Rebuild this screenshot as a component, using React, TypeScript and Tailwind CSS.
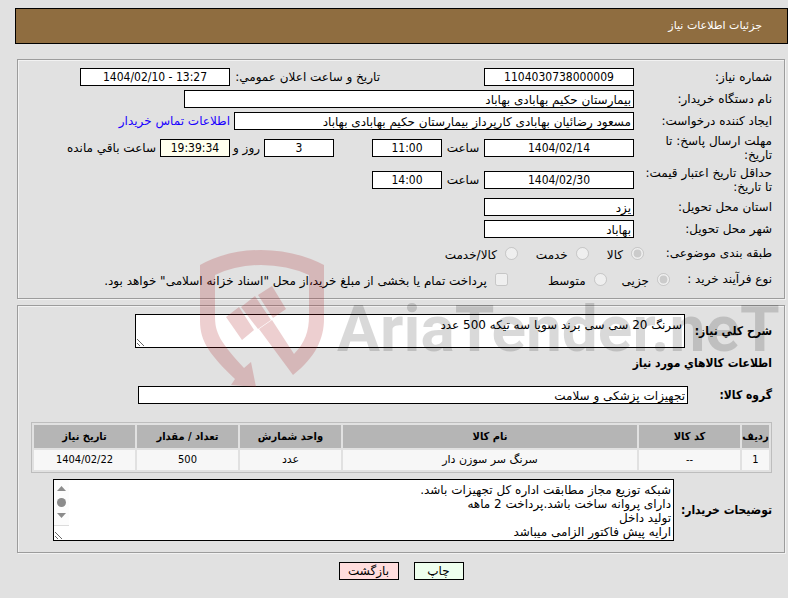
import React from "react";
import clsx from "clsx";

const Field = ({ id, value, className }: { id: string; value: string; className?: string }) => (
  <input
    id={id}
    type="text"
    readOnly
    defaultValue={value}
    className={clsx("h-[18px] min-w-0 border border-black bg-white px-[2px] pt-px leading-4 outline-none", className)}
  />
);

const NumberField = ({ id, value, className }: { id: string; value: string; className?: string }) => (
  <input
    id={id}
    type="text"
    dir="ltr"
    readOnly
    defaultValue={value}
    className={clsx("h-[18px] min-w-0 border border-black px-[2px] text-center font-['DejaVu_Sans_Condensed','DejaVu_Sans',sans-serif] leading-4 outline-none", className)}
  />
);

const Row = ({ id, label, children }: { id?: string; label: React.ReactNode; children: React.ReactNode }) => (
  <div className="flex items-center">
    <label htmlFor={id} className="w-[138px] shrink-0">{label}</label>
    {children}
  </div>
);

const Option = ({ name, label, type = "radio", checked = false }: { name: string; label: string; type?: string; checked?: boolean }) => (
  <label className="flex items-center gap-2 whitespace-nowrap">
    <input type={type} name={name} defaultChecked={checked} disabled className="m-0 size-[13px] shrink-0" />
    <span className="pt-1">{label}</span>
  </label>
);

const panel = "border border-[#9c9c9c] pr-3 pl-[13px] shadow-[1px_1px_0_#f2f2f2,inset_1px_1px_0_#f2f2f2]";
const condensed = "font-['DejaVu_Sans_Condensed','DejaVu_Sans',sans-serif]";

const items = [
  { row: "1", code: "--", name: "سرنگ سر سوزن دار", unit: "عدد", count: "500", date: "1404/02/22" },
];

const Watermark = () => (
  <div dir="ltr" aria-hidden="true" className="pointer-events-none absolute inset-x-0 top-[248px] flex h-[140px] overflow-hidden pl-[199px]">
    <svg width="126" height="140" viewBox="0 0 126 140" className="shrink-0 text-[#aa1419] opacity-20" fill="currentColor">
      <path d="M1 17Q28 2 62 2Q96 2 125 17V71C125 90 117 109 94 127L60 81L73 72L95 106C106 95 110 83 110 68V27Q88 17 62 17Q37 17 16 27V68C16 85 21 94 45 120L52 114L57 139L32 137L36 131C12 108 1 94 1 73Z" />
      <path d="M27 69L40 59L55 82L43 92ZM42 59L56 48L72 72L59 81ZM59 47L73 38L87 61L74 70Z" />
    </svg>
    <span className="ml-3 font-[Roboto,'Liberation_Sans',sans-serif] text-[64px] leading-[164px] font-bold whitespace-nowrap text-black/15">
      AriaTender.neT
    </span>
  </div>
);

const App = () => {
  return (
    <div dir="rtl" lang="fa" className="relative min-h-screen overflow-hidden bg-[#e1e1e1] pt-2 pb-[18px] font-['DejaVu_Sans',sans-serif] text-[12px] leading-[14px] text-black">
      <header className="ml-[15px] flex h-9 items-center border border-black bg-[#8f6d40] px-[25px] text-[11px] text-white">
        <h1>جزئیات اطلاعات نیاز</h1>
      </header>

      <main className="mr-[3px] ml-[17px] pt-[15px]">
        <section className={clsx(panel, "flex flex-col gap-1 pt-2 pb-2")}>
          <Row id="number" label="شماره نیاز:">
            <NumberField id="number" value="1104030738000009" className="w-[150px] bg-white" />
            <label htmlFor="announce" className="mr-[104px] w-[150px] whitespace-nowrap">تاریخ و ساعت اعلان عمومي:</label>
            <NumberField id="announce" value="1404/02/10 - 13:27" className="w-[150px] bg-white" />
          </Row>
          <Row id="buyer" label="نام دستگاه خریدار:">
            <Field id="buyer" value="بیمارستان حکیم بهابادی بهاباد" className="w-[450px]" />
          </Row>
          <Row id="creator" label="ایجاد کننده درخواست:">
            <Field id="creator" value="مسعود رضائیان بهابادی کارپرداز بیمارستان حکیم بهابادی بهاباد" className="w-[400px]" />
            <a href="#" className="mr-1 whitespace-nowrap text-[#1a00ff]">اطلاعات تماس خریدار</a>
          </Row>
          <Row id="deadline" label={<>مهلت ارسال پاسخ: تا<br />تاریخ:</>}>
            <NumberField id="deadline" value="1404/02/14" className="w-[150px] bg-white" />
            <label htmlFor="deadline-hour" className="w-[42px] text-center">ساعت</label>
            <NumberField id="deadline-hour" value="11:00" className="w-[70px] bg-white" />
            <NumberField id="days" value="3" className="mr-[38px] w-[70px] bg-white" />
            <label htmlFor="days" className="w-[34px] pr-1 whitespace-nowrap">روز و</label>
            <NumberField id="left" value="19:39:34" className="w-[70px] bg-[#ffffee]" />
            <label htmlFor="left" className="mr-1 whitespace-nowrap">ساعت باقي مانده</label>
          </Row>
          <Row id="valid" label={<>حداقل تاریخ اعتبار قیمت:<br />تا تاریخ:</>}>
            <NumberField id="valid" value="1404/02/30" className="w-[150px] bg-white" />
            <label htmlFor="valid-hour" className="w-[42px] text-center">ساعت</label>
            <NumberField id="valid-hour" value="14:00" className="w-[70px] bg-white" />
          </Row>
          <Row id="province" label="استان محل تحویل:">
            <Field id="province" value="یزد" className="w-[150px]" />
          </Row>
          <Row id="city" label="شهر محل تحویل:">
            <Field id="city" value="بهاباد" className="w-[150px]" />
          </Row>
          <div className="flex h-[22px] items-center gap-[18px]">
            <span className="w-[110px]">طبقه بندی موضوعی:</span>
            <Option name="category" label="کالا" checked />
            <Option name="category" label="خدمت" />
            <Option name="category" label="کالا/خدمت" />
          </div>
          <div className="flex h-[22px] items-center">
            <span className="w-[102px] shrink-0">نوع فرآیند خرید :</span>
            <div className="flex items-center gap-[15px]">
              <Option name="process" label="جزیی" checked />
              <Option name="process" label="متوسط" />
            </div>
            <div className="mr-10">
              <Option name="treasury" type="checkbox" label={'پرداخت تمام یا بخشی از مبلغ خرید،از محل "اسناد خزانه اسلامی" خواهد بود.'} />
            </div>
          </div>
        </section>

        <section className={clsx(panel, "mt-[6px] pt-2 pb-[11px]")}>
          <div className="flex items-center">
            <label htmlFor="summary" className={clsx(condensed, "w-[87px] shrink-0 font-bold whitespace-nowrap")}>شرح کلي نیاز:</label>
            <textarea
              id="summary"
              readOnly
              defaultValue="سرنگ 20 سی سی برند سوپا سه تیکه 500 عدد"
              className="block h-[34px] w-[550px] overflow-hidden border border-black bg-white px-[2px] pt-[3px] outline-none"
            />
          </div>
          <h2 className={clsx(condensed, "mt-2 font-bold")}>اطلاعات کالاهاي مورد نیاز</h2>
          <div className="mt-4 flex items-center">
            <label htmlFor="group" className={clsx(condensed, "w-[84px] shrink-0 font-bold")}>گروه کالا:</label>
            <Field id="group" value="تجهیزات پزشکی و سلامت" className="w-[550px]" />
          </div>

          <table className="mt-[18px] w-full table-fixed border-separate border-spacing-[2px] border border-[#bdbdbd] text-center text-[11px]">
            <thead className={condensed}>
              <tr className="h-[23px] bg-[#b5b5b5]">
                <th className="w-[27px]">ردیف</th>
                <th className="w-[101px]">کد کالا</th>
                <th>نام کالا</th>
                <th className="w-[101px]">واحد شمارش</th>
                <th className="w-[101px]">تعداد / مقدار</th>
                <th className="w-[101px]">تاریخ نیاز</th>
              </tr>
            </thead>
            <tbody>
              {items.map((item) => (
                <tr key={item.row} className="h-5 bg-[#f7f7f7]">
                  <td className={condensed}>{item.row}</td>
                  <td className={condensed}>{item.code}</td>
                  <td>{item.name}</td>
                  <td>{item.unit}</td>
                  <td className={condensed}>{item.count}</td>
                  <td className={condensed}>{item.date}</td>
                </tr>
              ))}
            </tbody>
          </table>

          <div className="mt-[6px] flex items-center">
            <label htmlFor="notes" className={clsx(condensed, "w-[98px] shrink-0 font-bold whitespace-nowrap")}>توضیحات خریدار:</label>
            <div className="relative w-[621px]">
              <textarea
                id="notes"
                readOnly
                defaultValue={"شبکه توزیع مجاز مطابقت اداره کل تجهیزات باشد.\nدارای پروانه ساخت باشد.پرداخت 2 ماهه\nتولید داخل\nارایه پیش فاکتور الزامی میباشد"}
                className="block h-[62px] w-full overflow-hidden border border-black bg-white px-[2px] pt-[3px] outline-none"
              />
              <svg width="15" height="46" className="absolute top-px left-px bg-[#fcfcfc]" fill="#8b8b8b">
                <path d="M3 11L7.500 6L12 11Z" />
                <circle cx="7.500" cy="22.500" r="4.500" />
                <path d="M3 33L7.500 38L12 33Z" />
                <path d="M0 45H15V46H0Z" fill="#dcdcdc" />
              </svg>
            </div>
          </div>
        </section>

        <div className="mt-[9px] flex justify-center gap-[15px]">
          <button type="button" className="h-[18px] w-[50px] border border-black bg-[#eeffee]">چاپ</button>
          <button type="button" className="h-[18px] w-[60px] border border-black bg-[#ffdddd]">بازگشت</button>
        </div>
      </main>

      <Watermark />
    </div>
  );
};

export default App;
